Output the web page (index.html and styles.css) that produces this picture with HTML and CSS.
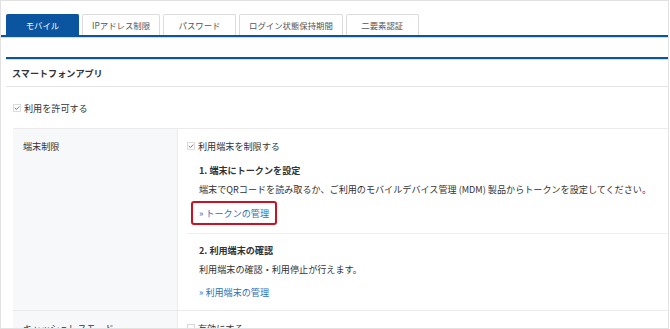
FILE: index.html
```html
<!DOCTYPE html>
<html lang="ja">
<head>
  <meta charset="UTF-8">
  <title>モバイル設定</title>
  <link rel="stylesheet" href="styles.css">
</head>
<body>

  <div class="frame">
    <div class="tabs">
      <div class="tab active">モバイル</div>
      <div class="tab">IPアドレス制限</div>
      <div class="tab">パスワード</div>
      <div class="tab">ログイン状態保持期間</div>
      <div class="tab">二要素認証</div>
    </div>

    <div class="panel">
      <div class="section">
        <div class="section-title">スマートフォンアプリ</div>

        <div class="allow-row">
          <label class="check">
            <svg class="box" width="8" height="8" viewBox="0 0 8 8"><rect x="0.5" y="0.5" width="7" height="7" fill="#fff" stroke="#dcdcdc"/><polyline points="1.8,4 3.4,5.5 6.2,2.6" fill="none" stroke="#666" stroke-width="0.9"/></svg>
            利用を許可する
          </label>
        </div>

        <div class="table">
          <div class="row">
            <div class="label">端末制限</div>
            <div class="value">
              <label class="check">
                <svg class="box" width="8" height="8" viewBox="0 0 8 8"><rect x="0.5" y="0.5" width="7" height="7" fill="#fff" stroke="#dcdcdc"/><polyline points="1.8,4 3.4,5.5 6.2,2.6" fill="none" stroke="#666" stroke-width="0.9"/></svg>
                利用端末を制限する
              </label>

              <div class="step">
                <div class="step-title">1. 端末にトークンを設定</div>
                <div class="step-text">端末でQRコードを読み取るか、ご利用のモバイルデバイス管理 (MDM) 製品からトークンを設定してください。</div>
                <div class="step-link"><a href="#" class="marked">» トークンの管理</a></div>
              </div>

              <div class="step second">
                <div class="step-title">2. 利用端末の確認</div>
                <div class="step-text">利用端末の確認・利用停止が行えます。</div>
                <div class="step-link"><a href="#">» 利用端末の管理</a></div>
              </div>
            </div>
          </div>

          <div class="row">
            <div class="label">キャッシュレスモード</div>
            <div class="value">
              <label class="check">
                <svg class="box" width="8" height="8" viewBox="0 0 8 8"><rect x="0.5" y="0.5" width="7" height="7" fill="#fff" stroke="#d6d6d6"/></svg>
                有効にする
              </label>
            </div>
          </div>
        </div>
      </div>
    </div>
  </div>

</body>
</html>
```

FILE: styles.css
```css
body {
  margin: 0;
  font-family: 'Noto Sans CJK JP', 'Noto Sans', sans-serif;
  font-size: 9.1px;
  color: #333;
  background: #fff;
}
.frame {
  width: 669px;
  height: 329px;
  box-sizing: border-box;
  border: 1px solid #e2e2e2;
  padding-top: 13px;
  overflow: hidden;
}
.tabs {
  display: flex;
  gap: 3px;
  padding-left: 5px;
  border-bottom: 2px solid #0b55a0;
  box-shadow: 0 1px 0 #cddcee;
}
.tab {
  height: 20px;
  line-height: 20px;
  min-width: 53px;
  padding: 0 9px;
  text-align: center;
  font-size: 8.4px;
  color: #555;
  border: 1px solid #dcdcdc;
  border-bottom: none;
  border-radius: 2px 2px 0 0;
  background: #fff;
}
.tab.active {
  background: #0b55a0;
  border-color: #0b55a0;
  color: #fff;
}
.panel {
  padding: 20px 0 0 5px;
}
.section {
  border-top: 2px solid #0b55a0;
  box-shadow: inset 0 1px 0 #cddcee;
}
.section-title {
  height: 26px;
  line-height: 26px;
  padding: 1px 0 0 6px;
  font-weight: bold;
  border-bottom: 1px solid #e6e6e6;
}
.allow-row {
  height: 41px;
  display: flex;
  align-items: center;
  padding-left: 7px;
}
.check {
  display: flex;
  align-items: center;
  gap: 3px;
  height: 16px;
}
.box {
  flex: none;
}
.table {
  margin-left: 7px;
  border-top: 1px solid #ebebeb;
}
.row {
  display: flex;
  border-bottom: 1px solid #ebebeb;
}
.label {
  width: 154px;
  flex: none;
  background: #f7f8fa;
  border-right: 1px solid #ebebeb;
  padding: 9px 0 0 10px;
  line-height: 16px;
}
.value {
  flex: 1;
  padding: 9px 0 10px 9px;
  line-height: 16px;
}
.step {
  padding-left: 12px;
  padding-top: 8px;
}
.step-title {
  font-weight: bold;
}
.step-text {
  margin-top: 3px;
}
.step-link {
  margin-top: 8px;
  padding-bottom: 12px;
}
.step.second {
  border-top: 1px solid #efefef;
  padding-top: 8px;
}
.step.second .step-text {
  margin-top: 3px;
}
.step.second .step-link {
  margin-top: 7px;
  padding-bottom: 0;
}
a {
  color: #2f6fb5;
  text-decoration: none;
}
.marked {
  position: relative;
}
.marked::after {
  content: "";
  position: absolute;
  top: -5px;
  bottom: -5px;
  left: -8px;
  right: -8px;
  border: 2px solid #cc1124;
  border-radius: 3px;
}
```
